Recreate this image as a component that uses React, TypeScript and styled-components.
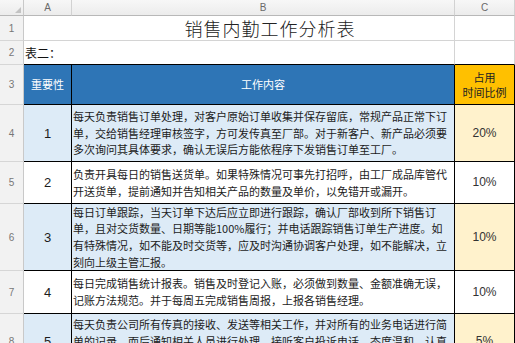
import React from 'react';
import styled, { createGlobalStyle } from 'styled-components';

const GlobalStyle = createGlobalStyle`
    html, body {
        margin: 0;
        padding: 0;
        background: #ffffff;
        overflow: hidden;
    }
`;

const Sheet = styled.div`
    display: grid;
    grid-template-columns: 24px 48px 383px 60px;
    grid-template-rows: 16px 25px 24px 40px 57px 42px 67px 43px 56px;
    width: 515px;
    font-family: 'Noto Sans CJK SC', 'Noto Sans', sans-serif;
    color: #1c1c1c;
`;

const Corner = styled.div`
    position: relative;
    box-sizing: border-box;
    background: linear-gradient(#f7f7f7, #ececec);
    border-right: 1px solid #c9c9c9;
    border-bottom: 1px solid #b8b8b8;

    &::after {
        content: '';
        position: absolute;
        right: 2px;
        bottom: 2px;
        border-left: 6px solid transparent;
        border-bottom: 6px solid #c3c3c3;
    }
`;

const ColHead = styled.div`
    box-sizing: border-box;
    display: flex;
    align-items: center;
    justify-content: center;
    background: linear-gradient(#f7f7f7, #ececec);
    border-right: 1px solid #d2d2d2;
    border-bottom: 1px solid #b8b8b8;
    font-family: 'Liberation Sans', Arial, sans-serif;
    font-size: 10px;
    color: #6a6a6a;
`;

const RowHead = styled.div`
    box-sizing: border-box;
    display: flex;
    align-items: center;
    justify-content: center;
    background: #f2f2f2;
    border-right: 1px solid #c9c9c9;
    border-bottom: 1px solid #d6d6d6;
    font-family: 'Liberation Sans', Arial, sans-serif;
    font-size: 10px;
    color: #777;
`;

const Cell = styled.div<{ $bg?: string; $line?: string; $bottom?: string; $span?: number; $color?: string }>`
    box-sizing: border-box;
    display: flex;
    flex-direction: column;
    justify-content: center;
    align-items: center;
    text-align: center;
    overflow: hidden;
    grid-column: span ${p => p.$span || 1};
    background: ${p => p.$bg || '#ffffff'};
    border-right: 1px solid ${p => p.$line || '#000'};
    border-bottom: 1px solid ${p => p.$bottom || p.$line || '#000'};
    color: ${p => p.$color || '#1c1c1c'};
    font-size: 11px;
    line-height: 15px;
`;

const TitleText = styled.div`
    padding-left: 62px;
    font-size: 18px;
    font-weight: 300;
    letter-spacing: 1px;
    line-height: 22px;
    color: #222;
    white-space: nowrap;
`;

const NoteText = styled.div`
    align-self: flex-start;
    padding-left: 1px;
    font-size: 12px;
    color: #111;
`;

const Number = styled.span`
    font-family: 'Liberation Sans', Arial, sans-serif;
    font-size: 13px;
`;

const Ratio = styled.span`
    font-family: 'Liberation Sans', Arial, sans-serif;
    font-size: 12px;
    color: #333;
`;

const Content = styled.div`
    align-self: stretch;
    text-align: left;
    padding-left: 1px;
    font-size: 11px;
    line-height: 16.7px;
`;

const Line = styled.div`
    white-space: nowrap;
`;

const rows = [
    {
        n: '4',
        rank: '1',
        ratio: '20%',
        lines: [
            '每天负责销售订单处理，对客户原始订单收集并保存留底，常规产品正常下订',
            '单，交给销售经理审核签字，方可发传真至厂部。对于新客户、新产品必须要',
            '多次询问其具体要求，确认无误后方能依程序下发销售订单至工厂。',
        ],
    },
    {
        n: '5',
        rank: '2',
        ratio: '10%',
        lines: [
            '负责开具每日的销售送货单。如果特殊情况可事先打招呼，由工厂成品库管代',
            '开送货单，提前通知并告知相关产品的数量及单价，以免错开或漏开。',
        ],
    },
    {
        n: '6',
        rank: '3',
        ratio: '10%',
        lines: [
            '每日订单跟踪，当天订单下达后应立即进行跟踪，确认厂部收到所下销售订',
            '单，且对交货数量、日期等能100%履行；并电话跟踪销售订单生产进度。如',
            '有特殊情况，如不能及时交货等，应及时沟通协调客户处理，如不能解决，立',
            '刻向上级主管汇报。',
        ],
    },
    {
        n: '7',
        rank: '4',
        ratio: '10%',
        lines: [
            '每日完成销售统计报表。销售及时登记入账，必须做到数量、金额准确无误，',
            '记账方法规范。并于每周五完成销售周报，上报各销售经理。',
        ],
    },
    {
        n: '8',
        rank: '5',
        ratio: '5%',
        lines: [
            '每天负责公司所有传真的接收、发送等相关工作，并对所有的业务电话进行简',
            '单的记录，而后通知相关人员进行处理，接听客户投诉电话，态度温和、认真',
            '记录，并及时反馈给相关部门处理。',
        ],
    },
];

export default function App() {
    return (
        <>
            <GlobalStyle />
            <Sheet>
                <Corner />
                <ColHead>A</ColHead>
                <ColHead>B</ColHead>
                <ColHead>C</ColHead>

                <RowHead>1</RowHead>
                <Cell $span={2} $line="#d4d4d4">
                    <TitleText>销售内勤工作分析表</TitleText>
                </Cell>
                <Cell $line="#d4d4d4" />

                <RowHead>2</RowHead>
                <Cell $span={2} $line="#d4d4d4" $bottom="#000">
                    <NoteText>表二：</NoteText>
                </Cell>
                <Cell $line="#d4d4d4" $bottom="#000" />

                <RowHead>3</RowHead>
                <Cell $bg="#2e75b6" $color="#fff">重要性</Cell>
                <Cell $bg="#2e75b6" $color="#fff">工作内容</Cell>
                <Cell $bg="#ffc000" $color="#222">
                    <div>占用</div>
                    <div>时间比例</div>
                </Cell>

                {rows.map((r, i) => {
                    const shaded = i % 2 === 0;
                    return (
                        <React.Fragment key={r.n}>
                            <RowHead>{r.n}</RowHead>
                            <Cell $bg={shaded ? '#ddebf7' : '#fff'}>
                                <Number>{r.rank}</Number>
                            </Cell>
                            <Cell $bg={shaded ? '#ddebf7' : '#fff'}>
                                <Content>
                                    {r.lines.map(l => (
                                        <Line key={l}>{l}</Line>
                                    ))}
                                </Content>
                            </Cell>
                            <Cell $bg={shaded ? '#fff2cc' : '#fff'}>
                                <Ratio>{r.ratio}</Ratio>
                            </Cell>
                        </React.Fragment>
                    );
                })}
            </Sheet>
        </>
    );
}
